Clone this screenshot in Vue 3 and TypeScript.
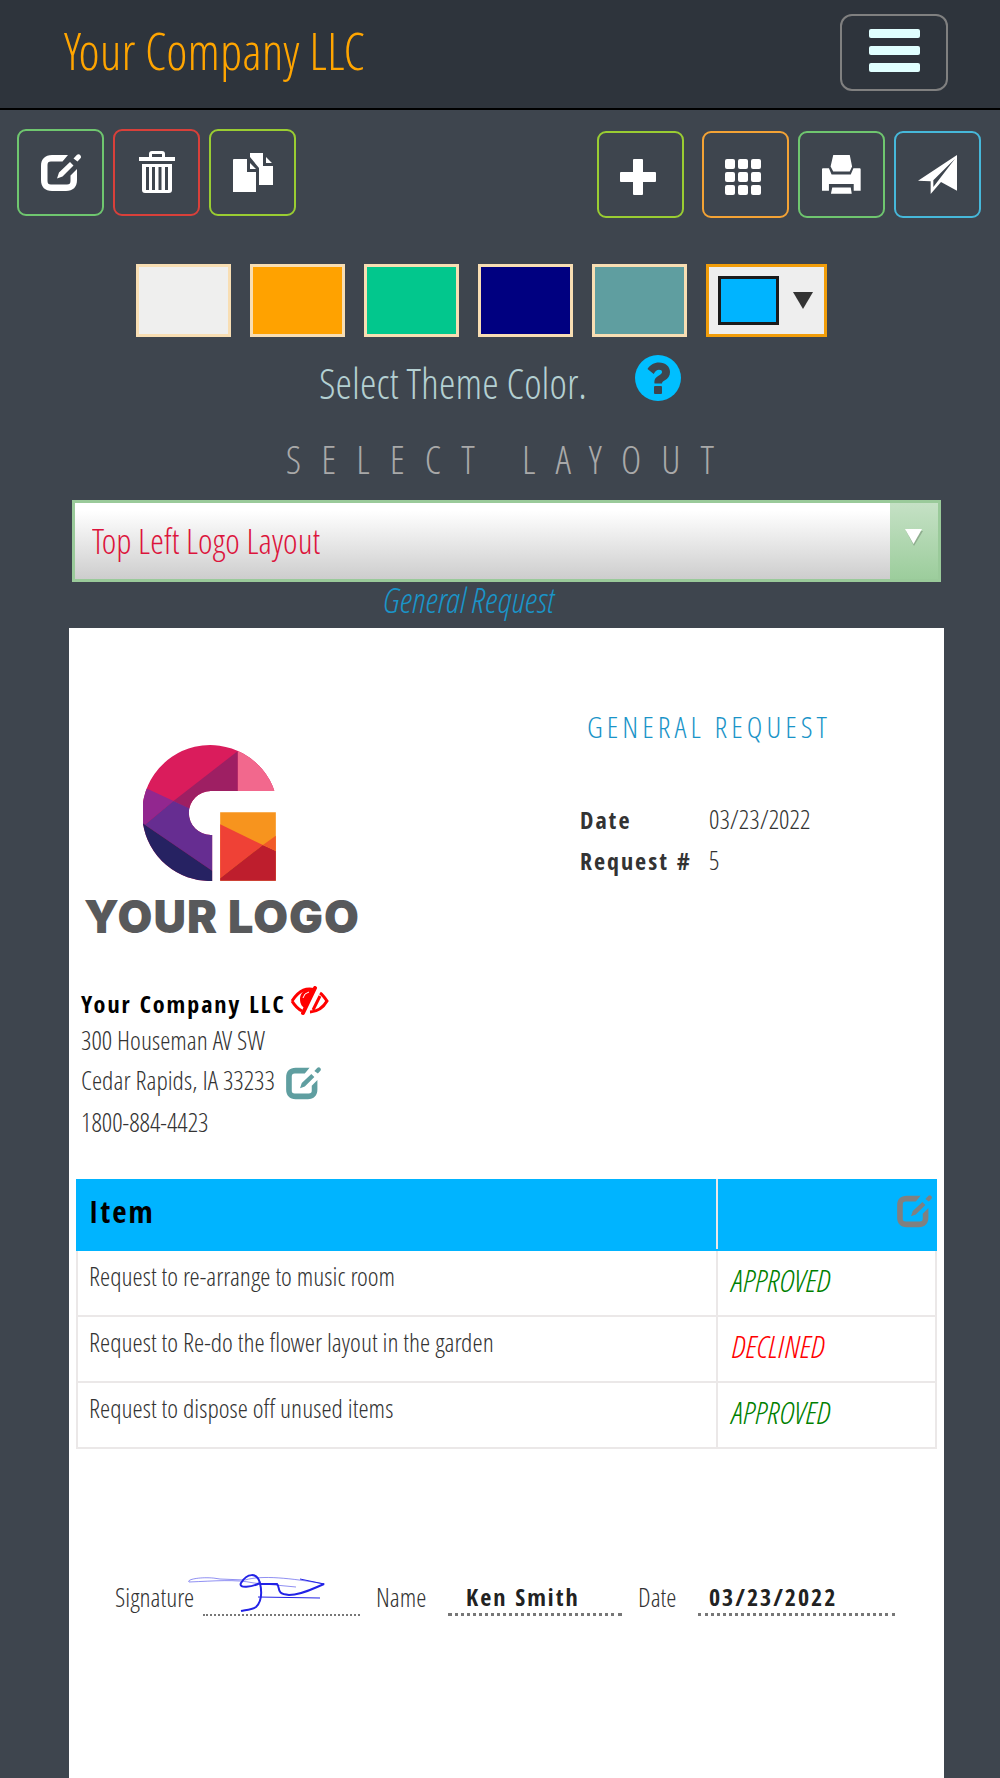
<script setup lang="ts">
import { ref } from 'vue'

interface RequestItem {
  id: number
  text: string
  status: 'APPROVED' | 'DECLINED'
}

const company = 'Your Company LLC'
const layout = ref('top-left')
const themeColor = ref('#00b4ff')

const swatches = [
  { name: 'Light grey', value: '#efefee' },
  { name: 'Orange', value: '#ffa200' },
  { name: 'Green', value: '#02c78d' },
  { name: 'Navy', value: '#000080' },
  { name: 'Cadet blue', value: '#5f9ea0' },
]

const items: RequestItem[] = [
  { id: 1, text: 'Request to re-arrange to music room', status: 'APPROVED' },
  { id: 2, text: 'Request to Re-do the flower layout in the garden', status: 'DECLINED' },
  { id: 3, text: 'Request to dispose off unused items', status: 'APPROVED' },
]

const editBody =
  'M27 1H11C4 1 0 5 0 12V26C0 33 4 37 11 37H25C32 37 36 33 36 26V15L29.500 21.500V27C29.500 29.500 28.500 30.500 26 30.500H10C7.500 30.500 6.500 29.500 6.500 27V11C6.500 8.500 7.500 7.500 10 7.500H21.500Z'
const editPencil = 'M16 24.500L18 18.500L29 8L32.500 11.500L21.500 22.500ZM32.500 4.500L36 0.800Q38 -0.500 39.500 1.500Q40.500 3 39.500 4.200L36.500 7.500Z'
</script>

<template>
  <div class="page">
    <header class="topbar">
      <a class="brand" href="#">{{ company }}</a>
      <button class="menu" type="button" aria-label="Menu">
        <span></span><span></span><span></span>
      </button>
    </header>

    <nav class="toolbar">
      <div class="tools">
        <button class="tool green" type="button" aria-label="Edit">
          <svg width="40" height="38" viewBox="0 0 40 38"><path :d="editBody" /><path :d="editPencil" /></svg>
        </button>
        <button class="tool red" type="button" aria-label="Delete">
          <svg width="36" height="43" viewBox="0 0 36 43">
            <path fill-rule="evenodd" d="M10 6V3Q10 0 13 0H23Q26 0 26 3V6H36V10H0V6ZM13 6H23V3H13Z" />
            <path fill-rule="evenodd" d="M3 13H33V39Q33 42 30 42H6Q3 42 3 39ZM7 16V39H10V16ZM13 16V39H16V16ZM19.500 16V39H22.500V16ZM26 16V39H29V16Z" />
          </svg>
        </button>
        <button class="tool lime" type="button" aria-label="Duplicate">
          <svg width="40" height="39" viewBox="0 0 40 39">
            <path d="M1 6H14V19H23V39H0V7Q0 6 1 6ZM17 10L23 16H17ZM17 0H30V13H40V32H26V15L17 4ZM33 4L39 10H33Z" />
          </svg>
        </button>
      </div>
      <div class="tools right">
        <button class="tool lime apart small" type="button" aria-label="Add">
          <svg width="36" height="36" viewBox="0 0 36 36">
            <rect x="13" width="10" height="36" rx="1" /><rect y="13" width="36" height="10" rx="1" />
          </svg>
        </button>
        <button class="tool orange small" type="button" aria-label="Grid">
          <svg width="36" height="36" viewBox="0 0 36 36">
            <template v-for="r in 3" :key="r">
              <rect v-for="c in 3" :key="c" :x="(c - 1) * 13" :y="(r - 1) * 13" width="10" height="10" rx="2" />
            </template>
          </svg>
        </button>
        <button class="tool green" type="button" aria-label="Print">
          <svg width="39" height="39" viewBox="963 465 118 118">
            <path d="M997 465H1047L1054 500L1047 515H997L989 500ZM966 505H984L992 524H1050L1058 505H1077Q1080 505 1080 508V573H1059V553H984V573H963V508Q963 505 966 505ZM994 563H1050L1053 582H990Z" />
          </svg>
        </button>
        <button class="tool blue" type="button" aria-label="Send">
          <svg width="39" height="39" viewBox="1254 466 117 117">
            <path fill-rule="evenodd" d="M1371 466L1254 543L1292 545V583L1323 547L1371 573ZM1365 477L1300 562V542Z" />
          </svg>
        </button>
      </div>
    </nav>

    <div class="swatches">
      <button
        v-for="s in swatches"
        :key="s.value"
        class="swatch"
        type="button"
        :aria-label="s.name"
        :style="{ backgroundColor: s.value }"
        @click="themeColor = s.value"
      ></button>
      <button class="picker" type="button" aria-label="Custom color">
        <span class="chip" :style="{ backgroundColor: themeColor }"></span>
        <svg width="20" height="17" viewBox="0 0 20 17"><path fill="#333" d="M0 0H20L10 17Z" /></svg>
      </button>
    </div>

    <div class="theme-row">
      <span>Select Theme Color.</span>
      <button class="help" type="button" aria-label="Help">
        <svg width="46" height="46" viewBox="0 0 46 46">
          <circle cx="23" cy="23" r="23" fill="#00bfff" />
          <path fill="#3e454e" d="M12.500 14C15 10 19 7.500 24 7.500C30.500 7.500 35 11.500 35 17C35 21 33 23.500 29.500 25.500C27.500 26.700 27 27.300 27 28.500H19.500C19 24.500 20.500 22.500 23.500 20.700C26 19.200 27 18.300 27 17C27 15.500 26 14.700 24 14.700C21.800 14.700 20.500 15.800 18.700 19Z" />
          <rect x="19" y="31" width="8" height="8" rx="1" fill="#3e454e" />
        </svg>
      </button>
    </div>

    <label class="layout-label" for="layout">SELECT LAYOUT</label>
    <div class="layout-box">
      <select id="layout" v-model="layout">
        <option value="top-left">Top Left Logo Layout</option>
      </select>
      <span class="arrow">
        <svg width="18" height="17" viewBox="0 0 18 17"><path fill="#8fae8f" d="M1 2H18L9 17Z" /><path fill="#fff" d="M0 0H17L8.500 15Z" /></svg>
      </span>
    </div>
    <p class="caption">General Request</p>

    <main class="paper">
      <section class="top">
        <div class="sender">
          <svg class="logo" width="133" height="136" viewBox="249 75 398 408">
            <defs>
              <clipPath id="ring">
                <path d="M456 483A204 204 0 1 1 643 213H452A66 66 0 0 0 452 345H456Z" />
              </clipPath>
            </defs>
            <g clip-path="url(#ring)">
              <rect x="240" y="70" width="410" height="420" fill="#da1c5c" />
              <path fill="#9e1f63" d="M533 93V290H440L340 243Z" />
              <path fill="#f2688d" d="M533 70H660V220H533Z" />
              <path fill="#92278f" d="M240 196L340 243L240 325Z" />
              <path fill="#662d91" d="M340 243L470 303V462L254 314Z" />
              <path fill="#262262" d="M240 305L470 462V490H240Z" />
            </g>
            <path fill="#f7941e" d="M480 277H647V482H480Z" />
            <path fill="#ef4136" d="M480 313L608 375L480 475Z" />
            <path fill="#be1e2d" d="M608 375L647 393V482H480V475Z" />
            <path fill="#f15a29" d="M608 375L647 347V393Z" />
          </svg>
          <p class="logo-text">YOUR LOGO</p>
          <p class="name">
            {{ company }}
            <svg width="39" height="30" viewBox="0 0 39 30" fill="none" stroke="#f00" stroke-width="3">
              <path d="M2 15C10 3 17 2 24 3.500M30 7C33 9 35 12 37 15C33 22 27 25.500 20 26M2 15C5 20 8 23 12 25" />
              <path d="M25 2L13 27" stroke-width="4" stroke-linecap="round" />
              <path d="M30 10L23 24" stroke-width="3" />
              <path fill="#f00" stroke="none" d="M24 3C16 2 10 6 10 13C10 18 12 21 16 23Z" />
              <path stroke="#fff" stroke-width="1" d="M13 12Q14 7 19 6" />
            </svg>
          </p>
          <p class="line">300 Houseman AV SW</p>
          <p class="line tall">
            Cedar Rapids, IA 33233
            <button class="bare" type="button" aria-label="Edit address">
              <svg width="35" height="33" viewBox="0 0 40 38" fill="#5f9ea0"><path :d="editBody" /><path :d="editPencil" /></svg>
            </button>
          </p>
          <p class="line last">1800-884-4423</p>
        </div>
        <div class="meta">
          <h1>GENERAL REQUEST</h1>
          <dl>
            <dt>Date</dt>
            <dd>03/23/2022</dd>
            <dt>Request #</dt>
            <dd>5</dd>
          </dl>
        </div>
      </section>

      <table>
        <thead>
          <tr>
            <th>Item</th>
            <th class="tool-cell">
              <button class="bare" type="button" aria-label="Edit columns">
                <svg width="35" height="33" viewBox="0 0 40 38" fill="#808080"><path :d="editBody" /><path :d="editPencil" /></svg>
              </button>
            </th>
          </tr>
        </thead>
        <tbody>
          <tr v-for="item in items" :key="item.id">
            <td>{{ item.text }}</td>
            <td class="status" :class="item.status.toLowerCase()">{{ item.status }}</td>
          </tr>
        </tbody>
      </table>

      <section class="sign">
        <span>Signature</span>
        <span class="field thin">
          <svg class="scribble" width="140" height="40" viewBox="187 1573 140 40" fill="none" stroke="#2222e6">
            <path stroke-width="1" opacity="0.5" d="M189 1582C186 1579 205 1576 220 1579L245 1580C262 1575 290 1578 325 1584M189 1582C215 1581 235 1579 254 1583L296 1587" />
            <path stroke-width="2" d="M260 1583C257 1572 247 1573 241 1583C238 1589 252 1587 260 1583C262 1592 262 1601 256 1607C251 1610 245 1610 241 1611" />
            <path stroke-width="2" d="M260 1584H277C281 1588 275 1594 289 1595C302 1595 314 1588 324 1584" />
            <path stroke-width="1" d="M258 1597L320 1598M300 1579L324 1584" />
          </svg>
        </span>
        <span class="next">Name</span>
        <span class="field name-field">Ken Smith</span>
        <span class="next">Date</span>
        <span class="field">03/23/2022</span>
      </section>
    </main>
  </div>
</template>

<style>
body {
  margin: 0;
  background: #3e454e;
}
</style>

<style scoped>
* {
  box-sizing: border-box;
}
.page {
  display: flex;
  flex-direction: column;
  min-height: 100vh;
  background: #3e454e;
  color: #333;
  font-family: 'Open Sans Condensed Light', 'Open Sans Condensed', 'Liberation Sans Narrow', 'Liberation Sans', sans-serif;
  font-weight: 300;
}
p,
h1,
dl,
dd {
  margin: 0;
}
button {
  padding: 0;
  background: none;
  cursor: pointer;
}
svg {
  display: block;
  flex: none;
}
.topbar {
  display: flex;
  justify-content: space-between;
  align-items: flex-start;
  padding: 14px 52px 17px 64px;
  border-bottom: 2px solid #000;
  background: #2e343c;
}
.brand {
  color: #ffa500;
  font-size: 51px;
  line-height: 72px;
  text-decoration: none;
}
.menu {
  display: flex;
  flex-direction: column;
  align-items: center;
  justify-content: center;
  gap: 8px;
  width: 108px;
  height: 77px;
  padding-bottom: 4px;
  border: 2px solid #808080;
  border-radius: 12px;
}
.menu span {
  width: 51px;
  height: 9px;
  border-radius: 2px;
  background: #e0ffff;
}
.toolbar {
  display: flex;
  justify-content: space-between;
  padding: 19px 19px 0 17px;
}
.tools {
  display: flex;
  gap: 9px;
}
.tools.right {
  padding-top: 2px;
}
.tool {
  display: flex;
  align-items: center;
  justify-content: center;
  width: 87px;
  height: 87px;
  border: 2px solid;
  border-radius: 9px;
}
.tool svg {
  fill: #fff;
}
.tool.small {
  padding: 4px 6px 0 0;
}
.tool.apart {
  margin-right: 9px;
}
.green { border-color: #6fc66f; }
.red { border-color: #d9403a; }
.lime { border-color: #9acd32; }
.orange { border-color: #f4a335; }
.blue { border-color: #46b8da; }
.swatches {
  display: flex;
  justify-content: center;
  gap: 19px;
  margin-top: 46px;
  padding-right: 37px;
}
.swatch {
  width: 95px;
  height: 73px;
  border: 3px solid #f8deb3;
}
.picker {
  display: flex;
  align-items: center;
  gap: 14px;
  width: 121px;
  height: 73px;
  padding: 0 9px;
  border: 3px solid #f19d0a;
  background: #eee;
}
.chip {
  width: 61px;
  height: 49px;
  border: 3px solid #1b1b1b;
}
.theme-row {
  display: flex;
  justify-content: center;
  align-items: flex-start;
  gap: 48px;
  margin-top: 18px;
  color: #b4d0d2;
  font-size: 42px;
  line-height: 56px;
}
.help,
.bare {
  border: 0;
}
.layout-label {
  margin: 28px 0 21px;
  padding-left: 20px;
  color: #a9a9a9;
  font-size: 39px;
  line-height: 40px;
  letter-spacing: 20px;
  text-align: center;
}
.layout-box {
  display: flex;
  position: relative;
  height: 82px;
  margin: 0 59px 0 72px;
  border: 3px solid #9aca9a;
}
.layout-box select {
  flex: 1;
  padding: 0 68px 2px 17px;
  border: 0;
  border-radius: 0;
  background: linear-gradient(#fff 10%, #cdcdcd);
  color: #dc143c;
  font: inherit;
  font-size: 35px;
  appearance: none;
}
.arrow {
  display: flex;
  position: absolute;
  inset: 0 0 0 auto;
  justify-content: center;
  width: 48px;
  padding-top: 26px;
  background: linear-gradient(#c5e1c5, #9ccd9c);
  pointer-events: none;
}
.caption {
  margin-bottom: 10px;
  padding-right: 64px;
  color: #1a94c8;
  font-size: 35px;
  font-style: italic;
  line-height: 36px;
  text-align: center;
}
.paper {
  flex: 1;
  margin: 0 56px 0 69px;
  padding-bottom: 80px;
  background: #fff;
  font-size: 26px;
}
.top {
  display: grid;
  grid-template-columns: 499fr 364fr;
  padding-left: 12px;
}
.sender {
  padding-top: 117px;
}
.logo {
  margin-left: 62px;
}
.logo-text {
  margin: 10px 0 44px 3px;
  color: #58595b;
  font-family: Inter, sans-serif;
  font-size: 45px;
  font-weight: 900;
  line-height: 51px;
  letter-spacing: 1px;
}
.name,
.line {
  display: flex;
  align-items: center;
  line-height: 36px;
}
.name,
.meta dt,
.field {
  font-family: 'Open Sans Condensed', 'Liberation Sans Narrow', 'Liberation Sans', sans-serif;
  font-size: 24px;
  letter-spacing: 2px;
}
.name {
  gap: 4px;
  color: #000;
}
.name svg {
  margin-bottom: 6px;
}
.tall {
  gap: 11px;
  line-height: 44px;
}
.tall .bare {
  padding-top: 6px;
}
.last {
  line-height: 40px;
}
.meta {
  padding-top: 83px;
}
.meta h1 {
  padding-left: 7px;
  color: #1a94c8;
  font-size: 30px;
  font-weight: 300;
  line-height: 32px;
  letter-spacing: 4px;
}
.meta dl {
  display: grid;
  grid-template-columns: 129px 1fr;
  margin-top: 56px;
  line-height: 41px;
}
table {
  width: calc(100% - 14px);
  margin: 37px 7px 0;
  border-collapse: collapse;
  table-layout: fixed;
}
th {
  height: 70px;
  padding: 0 11px 8px;
  border: 2px solid #00b4ff;
  background: #00b4ff;
  color: #000;
  font-family: 'Open Sans Condensed', 'Liberation Sans Narrow', 'Liberation Sans', sans-serif;
  font-size: 31px;
  font-weight: 300;
  letter-spacing: 2px;
  text-align: left;
}
th:first-child {
  width: 74.5%;
  border-right-color: #ebe8e8;
}
th.tool-cell {
  padding-right: 3px;
}
.tool-cell .bare {
  display: block;
  margin-left: auto;
}
td {
  height: 66px;
  padding: 9px 11px;
  border: 2px solid #ebe8e8;
  line-height: 32px;
  vertical-align: top;
}
.status {
  padding: 13px 13px 10px;
  font-size: 32px;
  font-style: italic;
}
.approved { color: #008000; }
.declined { color: #f00; }
.sign {
  display: grid;
  grid-template-columns: 88px 157fr 88px 174fr 76px 197fr;
  margin-top: 130px;
  padding: 0 49px 0 46px;
  line-height: 36px;
}
.next {
  padding-left: 16px;
}
.field {
  position: relative;
  height: 37px;
  padding-left: 11px;
  border-bottom: 3px dotted #777;
  color: #222;
}
.thin {
  border-bottom-width: 2px;
}
.name-field {
  padding-left: 18px;
}
.scribble {
  position: absolute;
  top: -6px;
  left: -16px;
}
</style>
